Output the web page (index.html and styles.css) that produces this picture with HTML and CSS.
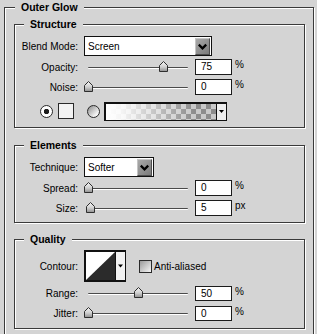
FILE: index.html
```html
<!DOCTYPE html>
<html>
<head>
<meta charset="utf-8">
<title>Outer Glow</title>
<link rel="stylesheet" href="styles.css">
</head>
<body>
<svg class="defs" width="0" height="0" aria-hidden="true">
  <defs>
    <linearGradient id="thumbFill" x1="0" y1="0" x2="0" y2="1">
      <stop offset="0" stop-color="#f6f6f6"/>
      <stop offset="0.55" stop-color="#cfcfcf"/>
      <stop offset="1" stop-color="#8e8e8e"/>
    </linearGradient>
    <linearGradient id="btnFill" x1="0" y1="0" x2="1" y2="1">
      <stop offset="0" stop-color="#a8a8a8"/>
      <stop offset="1" stop-color="#7c7c7c"/>
    </linearGradient>
  </defs>
</svg>
<fieldset class="frame outer">
  <legend>Outer Glow</legend>

  <fieldset class="frame group structure">
    <legend>Structure</legend>
    <div class="row row-select">
      <span class="lbl">Blend Mode:</span>
      <div class="select wide">
        <span class="val">Screen</span>
        <span class="btn"><svg width="14" height="16" viewBox="0 0 14 16"><polyline points="3,6.5 7,10.5 11,6.5" fill="none" stroke="#000" stroke-width="2.4"/></svg></span>
      </div>
    </div>
    <div class="row row-slider r-first">
      <span class="lbl">Opacity:</span>
      <div class="slider">
        <div class="track"></div>
        <svg class="thumb" style="left:75px" width="9" height="11" viewBox="0 0 9 11"><path d="M0.5 10.5V4.5L4.5 0.5L8.5 4.5V10.5Z" fill="url(#thumbFill)" stroke="#2e2e2e"/></svg>
      </div>
      <div class="num">75</div><span class="unit">%</span>
    </div>
    <div class="row row-slider r-next">
      <span class="lbl">Noise:</span>
      <div class="slider">
        <div class="track"></div>
        <svg class="thumb" style="left:0px" width="9" height="11" viewBox="0 0 9 11"><path d="M0.5 10.5V4.5L4.5 0.5L8.5 4.5V10.5Z" fill="url(#thumbFill)" stroke="#2e2e2e"/></svg>
      </div>
      <div class="num">0</div><span class="unit">%</span>
    </div>
    <div class="row row-radio">
      <span class="radio on"></span>
      <span class="swatch"></span>
      <span class="radio off"></span>
      <div class="grad">
        <div class="grad-fill"></div>
        <div class="grad-arrow"><svg width="9" height="15" viewBox="0 0 9 15"><polygon points="2,6 7,6 4.5,9" fill="#000"/></svg></div>
      </div>
    </div>
  </fieldset>

  <fieldset class="frame group elements">
    <legend>Elements</legend>
    <div class="row row-select">
      <span class="lbl">Technique:</span>
      <div class="select narrow">
        <span class="val">Softer</span>
        <span class="btn"><svg width="14" height="16" viewBox="0 0 14 16"><polyline points="3,6.5 7,10.5 11,6.5" fill="none" stroke="#000" stroke-width="2.4"/></svg></span>
      </div>
    </div>
    <div class="row row-slider r-first">
      <span class="lbl">Spread:</span>
      <div class="slider">
        <div class="track"></div>
        <svg class="thumb" style="left:0px" width="9" height="11" viewBox="0 0 9 11"><path d="M0.5 10.5V4.5L4.5 0.5L8.5 4.5V10.5Z" fill="url(#thumbFill)" stroke="#2e2e2e"/></svg>
      </div>
      <div class="num">0</div><span class="unit">%</span>
    </div>
    <div class="row row-slider r-next">
      <span class="lbl">Size:</span>
      <div class="slider">
        <div class="track"></div>
        <svg class="thumb" style="left:2px" width="9" height="11" viewBox="0 0 9 11"><path d="M0.5 10.5V4.5L4.5 0.5L8.5 4.5V10.5Z" fill="url(#thumbFill)" stroke="#2e2e2e"/></svg>
      </div>
      <div class="num">5</div><span class="unit">px</span>
    </div>
  </fieldset>

  <fieldset class="frame group quality">
    <legend>Quality</legend>
    <div class="row row-contour">
      <span class="lbl">Contour:</span>
      <svg class="contour" width="42" height="32" viewBox="0 0 42 32">
        <rect x="0" y="0" width="42" height="32" fill="#111"/>
        <rect x="2" y="2" width="29" height="28" fill="#fff"/>
        <polygon points="2,30 31,2 31,30" fill="#2b2b2b"/>
        <rect x="32" y="2" width="9" height="28" fill="#f2f2f2"/>
        <polygon points="34,14.5 39,14.5 36.5,17.5" fill="#000"/>
      </svg>
      <span class="check"></span>
      <span class="check-lbl">Anti-aliased</span>
    </div>
    <div class="row row-slider q-first">
      <span class="lbl">Range:</span>
      <div class="slider">
        <div class="track"></div>
        <svg class="thumb" style="left:50px" width="9" height="11" viewBox="0 0 9 11"><path d="M0.5 10.5V4.5L4.5 0.5L8.5 4.5V10.5Z" fill="url(#thumbFill)" stroke="#2e2e2e"/></svg>
      </div>
      <div class="num">50</div><span class="unit">%</span>
    </div>
    <div class="row row-slider q-next">
      <span class="lbl">Jitter:</span>
      <div class="slider">
        <div class="track"></div>
        <svg class="thumb" style="left:0px" width="9" height="11" viewBox="0 0 9 11"><path d="M0.5 10.5V4.5L4.5 0.5L8.5 4.5V10.5Z" fill="url(#thumbFill)" stroke="#2e2e2e"/></svg>
      </div>
      <div class="num">0</div><span class="unit">%</span>
    </div>
  </fieldset>
</fieldset>
</body>
</html>
```

FILE: styles.css
```css
* { box-sizing: border-box; }
html, body { margin: 0; padding: 0; }
body {
  background: #d4d4d4;
  font-family: "Liberation Sans", Arial, sans-serif;
  font-size: 10px;
  color: #000;
  width: 317px;
  height: 334px;
  overflow: hidden;
  padding: 1px 0 0 4px;
}
.defs { display: block; width: 0; height: 0; overflow: hidden; }

.frame {
  margin: 0;
  min-inline-size: 0;
  border: 1px solid #3a3a3a;
  box-shadow: inset 1px 1px 0 #fff, 1px 1px 0 #fff;
}
.frame > legend {
  font-size: 10.5px;
  font-weight: bold;
  line-height: 13px;
  padding: 0 6px;
  background: #d4d4d4;
}
.outer {
  width: 310px;
  padding: 4px 8px 14px 9px;
}
.outer > legend { margin-left: 1px; }
.group { padding: 0 0 6px 0; }
.group > legend { margin-left: 9px; }
.elements { margin-top: 11px; }
.quality { margin-top: 10px; padding-bottom: 7px; }

.row { display: flex; align-items: center; }
.lbl {
  flex: none;
  width: 63px;
  margin-right: 6px;
  text-align: right;
  white-space: nowrap;
}

.row-select { height: 20px; margin-top: 5px; }
.select {
  flex: none;
  height: 20px;
  display: flex;
  align-items: center;
  justify-content: space-between;
  background: #fff;
  border: 1px solid #111;
  padding: 0 1px 0 3px;
}
.select.wide { width: 128px; }
.select.narrow { width: 70px; }
.btn {
  width: 15px;
  height: 17px;
  display: flex;
  align-items: center;
  justify-content: center;
  background: linear-gradient(135deg, #a9a9a9, #7b7b7b);
  border: 1px solid;
  border-color: #c4c4c4 #4e4e4e #4e4e4e #c4c4c4;
}

.row-slider { height: 16px; }
.r-first { margin-top: 3px; }
.r-next { margin-top: 4px; }
.q-first { margin-top: 4px; height: 15px; }
.q-next { margin-top: 5px; height: 15px; }
.slider {
  flex: none;
  position: relative;
  width: 108px;
  height: 100%;
}
.track {
  margin: 8px 4px 0;
  height: 2px;
  border-top: 1px solid #4a4a4a;
  border-bottom: 1px solid #fff;
  border-radius: 1px;
}
.q-first .track, .q-next .track { margin-top: 7px; }
.thumb { position: absolute; top: 2px; display: block; }
.q-first .thumb, .q-next .thumb { top: 1px; }
.num {
  flex: none;
  width: 37px;
  height: 100%;
  margin-left: 3px;
  background: #fff;
  border: 1px solid #1c1c1c;
  padding-left: 5px;
  line-height: 14px;
}
.q-first .num, .q-next .num { line-height: 13px; }
.unit { margin-left: 3px; align-self: flex-start; line-height: 12px; }

.row-radio { height: 20px; margin-top: 6px; padding-left: 25px; }
.radio {
  flex: none;
  width: 13px;
  height: 13px;
  border-radius: 50%;
  border: 1px solid #2a2a2a;
}
.radio.on { background: radial-gradient(circle, #1e1e1e 0 2.4px, #fff 3px); }
.radio.off { background: linear-gradient(135deg, #8a8a8a, #f4f4f4 75%); margin-left: 13px; }
.swatch {
  flex: none;
  width: 16px;
  height: 16px;
  margin-left: 5px;
  border: 1px solid #2a2a2a;
  background: #f3f3f3;
}
.grad {
  flex: none;
  display: flex;
  width: 123px;
  height: 19px;
  margin-left: 4px;
  border: 1px solid #111;
  border-top-width: 2px;
  border-left-width: 2px;
}
.grad-fill {
  flex: 1;
  background:
    linear-gradient(to right, #fff 0%, rgba(255,255,255,0.9) 15%, rgba(255,255,255,0) 80%),
    repeating-conic-gradient(#c9c9c9 0 25%, #8c8c8c 0 50%) 0 0 / 10px 10px;
}
.grad-arrow {
  width: 10px;
  border-left: 1px solid #111;
  background: #eeeeee;
  display: flex;
  align-items: flex-start;
}

.row-contour { height: 32px; margin-top: 4px; }
.contour { flex: none; display: block; }
.check {
  flex: none;
  width: 13px;
  height: 13px;
  margin-left: 13px;
  border: 1px solid #2a2a2a;
  background: linear-gradient(135deg, #9a9a9a, #f6f6f6);
}
.check-lbl { margin-left: 2px; }
```
